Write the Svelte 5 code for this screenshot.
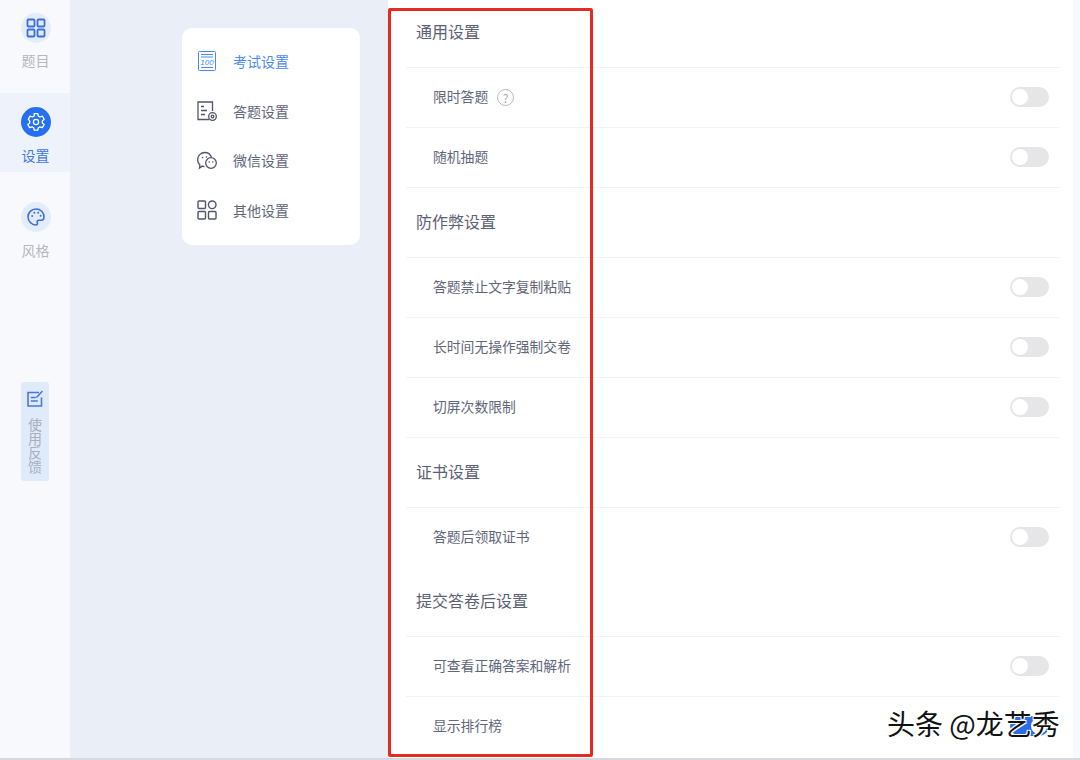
<script>
	const sections = [
		{ title: '通用设置', rows: [{ label: '限时答题', help: true }, { label: '随机抽题' }] },
		{ title: '防作弊设置', rows: [{ label: '答题禁止文字复制粘贴' }, { label: '长时间无操作强制交卷' }, { label: '切屏次数限制' }] },
		{ title: '证书设置', rows: [{ label: '答题后领取证书' }], plain: true },
		{ title: '提交答卷后设置', rows: [{ label: '可查看正确答案和解析' }, { label: '显示排行榜', on: true }] }
	];
</script>

<div class="page">
	<nav class="side">
		<div class="nav-item">
			<span class="bubble">
				<svg viewBox="0 0 20 20" width="20" height="20" fill="none" stroke="#3f6fd8" stroke-width="1.8">
					<rect x="1.5" y="1.5" width="7" height="7" rx="1" />
					<rect x="11.5" y="1.5" width="7" height="7" rx="1" />
					<rect x="1.5" y="11.5" width="7" height="7" rx="1" />
					<rect x="11.5" y="11.5" width="7" height="7" rx="1" />
				</svg>
			</span>
			<span>题目</span>
		</div>
		<div class="nav-item active">
			<span class="bubble">
				<svg viewBox="0 0 20 20" width="20" height="20" fill="none" stroke="#fff" stroke-width="1.3" stroke-linejoin="round">
					<path d="M8.2 1.6h3.6l.5 2.4 1.7 1 2.4-.8 1.8 3.100-1.900 1.600v2l1.900 1.600-1.800 3.100-2.400-.8-1.700 1-.5 2.400H8.200l-.5-2.400-1.700-1-2.400.8-1.800-3.100 1.900-1.600V8.900L2.300 7.300l1.800-3.100 2.400.8 1.700-1z" />
					<circle cx="10" cy="10" r="2.600" />
				</svg>
			</span>
			<span>设置</span>
		</div>
		<div class="nav-item">
			<span class="bubble">
				<svg viewBox="0 0 20 20" width="20" height="20" fill="none" stroke="#3f6fd8" stroke-width="1.6">
					<path d="M10 2C5.300 2 2 5.600 2 9.800c0 4.400 3.600 8.200 7.800 8.200 1.600 0 2-1.200 1.500-2.300-.6-1.300.2-2.500 1.600-2.500h2.300c1.800 0 2.800-1.300 2.800-3.300C18 5.400 14.600 2 10 2z" />
					<circle cx="6.200" cy="9" r="1" fill="#3f6fd8" stroke="none" />
					<circle cx="8.300" cy="5.700" r="1" fill="#3f6fd8" stroke="none" />
					<circle cx="12.200" cy="5.700" r="1" fill="#3f6fd8" stroke="none" />
					<circle cx="14.600" cy="8.800" r="1" fill="#3f6fd8" stroke="none" />
				</svg>
			</span>
			<span>风格</span>
		</div>
		<div class="feedback">
			<svg viewBox="0 0 18 18" width="18" height="18" fill="none" stroke="#4a78d8" stroke-width="1.600">
				<path d="M13 2.500H2v13.500h13.500V7.500" />
				<path d="M4.800 7.500h5M4.800 11h7" />
				<path d="M10.500 7.500L16.500 1" />
			</svg>
			<span class="feedback-text">使用反馈</span>
		</div>
	</nav>

	<div class="aside">
		<ul class="menu">
			<li class="current">
				<svg viewBox="0 0 20 20" width="20" height="20" fill="none" stroke="#4a8af0" stroke-width="1">
					<rect x="1.500" y="0.500" width="17" height="19" rx="1" />
					<path d="M4 3.500h12M4 6h12" />
					<text x="10" y="13.500" text-anchor="middle" class="hundred">100</text>
					<path d="M4 16.500h12" />
				</svg>
				考试设置
			</li>
			<li>
				<svg viewBox="0 0 20 20" width="20" height="20" fill="none" stroke="#50566a" stroke-width="1.300">
					<path d="M12 18.500H1V1h14.500v9" />
					<path d="M4 5.500h3M4 9.500h6M4 13.500h4" />
					<circle cx="15.500" cy="15.500" r="3.800" />
					<circle cx="15.500" cy="15.500" r="1.300" />
				</svg>
				答题设置
			</li>
			<li>
				<svg viewBox="0 0 20 20" width="20" height="20" fill="none" stroke="#50566a" stroke-width="1.300">
					<path d="M7.500 16.500c-.8 0-1.600-.1-2.300-.4L2.500 18l.4-3.100C1.400 13.500.6 11.700.6 9.800.6 5.800 3.800 2.500 7.800 2.500c3 0 5.600 1.900 6.700 4.700" />
					<circle cx="14" cy="13" r="5.300" />
					<circle cx="5.500" cy="7.500" r=".8" fill="#50566a" stroke="none" />
					<circle cx="9.500" cy="7" r=".8" fill="#50566a" stroke="none" />
					<circle cx="12.200" cy="12" r=".8" fill="#50566a" stroke="none" />
					<circle cx="15.800" cy="12" r=".8" fill="#50566a" stroke="none" />
				</svg>
				微信设置
			</li>
			<li>
				<svg viewBox="0 0 20 20" width="20" height="20" fill="none" stroke="#50566a" stroke-width="1.400">
					<rect x="1" y="1" width="7.500" height="7.500" rx="1" />
					<circle cx="15.200" cy="4.800" r="3.800" />
					<rect x="1" y="11.500" width="7.500" height="7.500" rx="1" />
					<rect x="11.500" y="11.500" width="7.500" height="7.500" rx="1" />
				</svg>
				其他设置
			</li>
		</ul>
	</div>

	<main class="panel">
		{#each sections as section, i}
			<h2 class="heading" class:first={i === 0}>{section.title}</h2>
			{#each section.rows as row}
				<div class="row" class:plain={section.plain}>
					<span class="label">{row.label}</span>
					{#if row.help}
						<span class="help">?</span>
					{/if}
					<span class="toggle" class:on={row.on}></span>
				</div>
			{/each}
		{/each}
	</main>

	<div class="highlight"></div>
	<div class="watermark">头条 @龙艺秀</div>
</div>

<style>
	:global(body) {
		margin: 0;
		font-family: "Noto Sans CJK SC", "Liberation Sans", sans-serif;
	}
	.page {
		position: relative;
		display: flex;
		height: 758px;
		overflow: hidden;
		background: #f8f9fc;
		border-bottom: 2px solid #d6d9df;
	}
	.side {
		flex: none;
		width: 70px;
		background: #f8f9fd;
		display: flex;
		flex-direction: column;
		align-items: center;
	}
	.nav-item {
		width: 100%;
		height: 79px;
		margin-bottom: 16px;
		padding: 14px 0 0 1px;
		box-sizing: border-box;
		display: flex;
		flex-direction: column;
		align-items: center;
		gap: 9px;
		font-size: 14px;
		line-height: 18px;
		color: #b4b7be;
	}
	.nav-item:first-child {
		height: 77px;
		padding-top: 13px;
		gap: 8px;
	}
	.nav-item.active {
		background: #eef2fb;
		color: #3d78ee;
	}
	.bubble {
		width: 30px;
		height: 30px;
		border-radius: 50%;
		background: #e2ecfb;
		display: flex;
		align-items: center;
		justify-content: center;
	}
	.active .bubble {
		background: #2470f0;
	}
	.feedback {
		width: 28px;
		height: 99px;
		margin-top: 99px;
		padding-top: 8px;
		box-sizing: border-box;
		background: #dfeafb;
		border-radius: 3px;
		display: flex;
		flex-direction: column;
		align-items: center;
		gap: 9px;
	}
	.feedback-text {
		width: 14px;
		font-size: 14px;
		line-height: 14px;
		color: #a9afbb;
		text-align: center;
	}
	.aside {
		flex: none;
		width: 318px;
		box-sizing: border-box;
		padding: 28px 28px 0 112px;
		background: #e9eef7;
	}
	.menu {
		list-style: none;
		margin: 0;
		padding: 8.500px 0 10.500px 15px;
		background: #fff;
		border-radius: 10px;
	}
	.menu li {
		height: 49.500px;
		display: flex;
		align-items: center;
		gap: 16px;
		font-size: 14px;
		color: #60667a;
	}
	.menu li.current {
		color: #4a8af0;
	}
	.hundred {
		font-size: 8px;
		font-style: italic;
		fill: #4a8af0;
		stroke: none;
		font-family: "Liberation Sans", sans-serif;
	}
	.panel {
		flex: none;
		width: 685px;
		box-sizing: border-box;
		padding: 0 13px 0 18px;
		background: #fff;
	}
	.heading {
		box-sizing: border-box;
		height: 70px;
		margin: 0;
		padding: 0 0 4px 10px;
		display: flex;
		align-items: center;
		font-size: 16px;
		font-weight: 400;
		color: #5b6073;
		border-bottom: 1px solid #f2f3f6;
	}
	.heading.first {
		height: 68px;
		padding-bottom: 6px;
	}
	.row {
		height: 59px;
		padding-left: 27px;
		display: flex;
		align-items: center;
		font-size: 13.800px;
		color: #60667a;
		border-bottom: 1px solid #f2f3f6;
	}
	.row.plain,
	.row:last-child {
		border-bottom: none;
	}
	.label {
		margin-bottom: 4px;
	}
	.help {
		width: 15px;
		height: 15px;
		margin: 0 0 1px 9px;
		border: 1px solid #b4b7be;
		border-radius: 50%;
		font-size: 12px;
		line-height: 15px;
		text-align: center;
		color: #a9acb4;
	}
	.toggle {
		position: relative;
		width: 39px;
		height: 20px;
		margin: 0 11px 1px auto;
		border-radius: 10px;
		background: #e6e6e8;
	}
	.toggle::after {
		content: "";
		position: absolute;
		top: 2px;
		left: 2px;
		width: 16px;
		height: 16px;
		border-radius: 50%;
		background: #fff;
	}
	.toggle.on {
		background: #2a6fe8;
	}
	.toggle.on::after {
		left: 21px;
	}
	.highlight {
		position: absolute;
		left: 388px;
		top: 8px;
		width: 199px;
		height: 743px;
		border: 3px solid #e52b20;
		border-radius: 2px;
	}
	.watermark {
		position: absolute;
		left: 887px;
		top: 705px;
		font-size: 28px;
		line-height: 36px;
		white-space: nowrap;
		color: #111;
		text-shadow: 1px 1px 0 #fff, -1px -1px 0 #fff, 1px -1px 0 #fff, -1px 1px 0 #fff;
	}
</style>
